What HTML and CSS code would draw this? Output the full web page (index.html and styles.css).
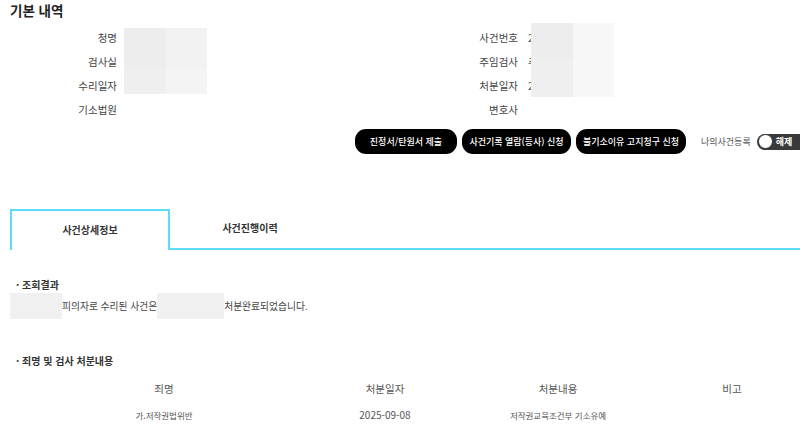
FILE: index.html
```html
<!DOCTYPE html>
<html lang="ko">
<head>
<meta charset="utf-8">
<link rel="stylesheet" href="styles.css">
</head>
<body>
<div class="page">
  <h2 class="title">기본 내역</h2>
  <div class="info">
    <div class="lbl">청명</div><div class="val"></div>
    <div class="lbl">사건번호</div><div class="val">2</div>
    <div class="lbl">검사실</div><div class="val"></div>
    <div class="lbl">주임검사</div><div class="val">주</div>
    <div class="lbl">수리일자</div><div class="val"></div>
    <div class="lbl">처분일자</div><div class="val">2</div>
    <div class="lbl">기소법원</div><div class="val"></div>
    <div class="lbl">변호사</div><div class="val"></div>
    <div class="mask mask-l"><span class="m a"></span><span class="m b"></span><span class="m c"></span><span class="m d"></span></div>
    <div class="mask mask-r"><span class="m a"></span><span class="m e"></span><span class="m c"></span><span class="m e"></span></div>
  </div>
  <div class="actions">
    <button class="btn b1">진정서/탄원서 제출</button>
    <button class="btn b2">사건기록 열람(등사) 신청</button>
    <button class="btn b3">불기소이유 고지청구 신청</button>
    <span class="mycase">나의사건등록</span>
    <span class="toggle"><span class="knob"></span><span class="tlabel">해제</span></span>
  </div>
  <div class="tabs">
    <div class="tab active">사건상세정보</div>
    <div class="tab">사건진행이력</div>
    <div class="tabline"></div>
  </div>
  <h3 class="sub">· 조회결과</h3>
  <div class="result">
    <span class="redact r1"></span><span>피의자로 수리된 사건은</span><span class="redact r2"></span><span>처분완료되었습니다.</span>
  </div>
  <h3 class="sub sub2">· 죄명 및 검사 처분내용</h3>
  <div class="table">
    <div class="th">죄명</div><div class="th">처분일자</div><div class="th">처분내용</div><div class="th">비고</div>
    <div class="td">가.저작권법위반</div><div class="td date">2025-09-08</div><div class="td">저작권교육조건부 기소유예</div><div class="td"></div>
  </div>
</div>
</body>
</html>
```
FILE: styles.css
```css
* { box-sizing: border-box; }
html, body { margin: 0; padding: 0; background: #fff; }
body {
  font-family: "Noto Sans CJK KR", "Noto Sans", sans-serif;
  color: #333;
  overflow: hidden;
}
.page { width: 800px; }
.title {
  margin: 0;
  padding-left: 10px;
  font-size: 13.5px;
  line-height: 20px;
  font-weight: 700;
  color: #222;
}
.info {
  position: relative;
  margin-top: 6px;
  display: grid;
  grid-template-columns: 117px 283px 118px 1fr;
  grid-auto-rows: 24px;
  font-size: 10.5px;
  color: #444;
}
.lbl { text-align: right; line-height: 24px; }
.val { padding-left: 10px; line-height: 24px; color: #555; }
.mask { position: absolute; display: grid; grid-template-columns: 1fr 1fr; }
.mask-l { left: 124px; top: 2px; width: 83px; height: 66px; grid-template-rows: 42px 24px; }
.mask-r { left: 531px; top: -3px; width: 83px; height: 74px; grid-template-rows: 1fr 1fr; }
.m.a { background: #ededed; }
.m.b { background: #f2f2f2; }
.m.c { background: #efefef; }
.m.d { background: #f4f4f4; }
.m.e { background: #f7f7f7; }
.actions {
  margin-top: 7px;
  height: 25px;
  display: flex;
  align-items: center;
  padding-left: 355px;
  white-space: nowrap;
}
.btn {
  flex: none;
  height: 25px;
  border: 0;
  border-radius: 11px;
  background: #000;
  color: #fff;
  font-family: inherit;
  font-size: 9px;
  font-weight: 500;
  padding: 0;
  margin-right: 5px;
}
.b1 { width: 102px; }
.b2 { width: 109px; margin-right: 5px; }
.b3 { width: 110px; margin-right: 15px; }
.mycase { flex: none; font-size: 9px; color: #555; margin-right: 6px; }
.toggle {
  flex: none;
  position: relative;
  width: 50px;
  height: 16px;
  border-radius: 8px;
  background: #3a3a3a;
  display: flex;
  align-items: center;
}
.knob {
  width: 15px;
  height: 15px;
  margin-left: 1px;
  border-radius: 50%;
  background: #fff;
  border: 1px solid #333;
}
.tlabel { margin-left: 3px; font-size: 9px; font-weight: 700; color: #fff; }
.tabs {
  margin-top: 55px;
  padding-left: 10px;
  display: flex;
  align-items: flex-end;
  height: 41px;
}
.tab {
  width: 160px;
  height: 41px;
  line-height: 38px;
  text-align: center;
  font-size: 10px;
  font-weight: 700;
  color: #333;
  border-bottom: 2px solid #5cdcf8;
}
.tab.active {
  border: 2px solid #5cdcf8;
  border-bottom: 0;
  line-height: 38px;
}
.tabline { flex: 1; height: 2px; background: #5cdcf8; }
.sub {
  margin: 26px 0 0 0;
  padding-left: 16px;
  font-size: 10px;
  line-height: 18px;
  font-weight: 700;
  color: #333;
}
.sub2 { margin-top: 33px; }
.result {
  margin-top: -1px;
  padding-left: 10px;
  height: 26px;
  display: flex;
  align-items: center;
  font-size: 9.75px;
  color: #444;
}
.redact { display: block; height: 26px; background: #f0f0f0; }
.r1 { width: 52px; }
.r2 { width: 67px; }
.table {
  margin-top: 6px;
  margin-left: 10px;
  display: grid;
  grid-template-columns: 308px 134px 212px 136px;
  grid-auto-rows: 26px;
  text-align: center;
}
.th { line-height: 26px; font-size: 10.5px; color: #555; }
.td { line-height: 26px; font-size: 8.5px; color: #555; }
.td.date { font-size: 10px; }
```
